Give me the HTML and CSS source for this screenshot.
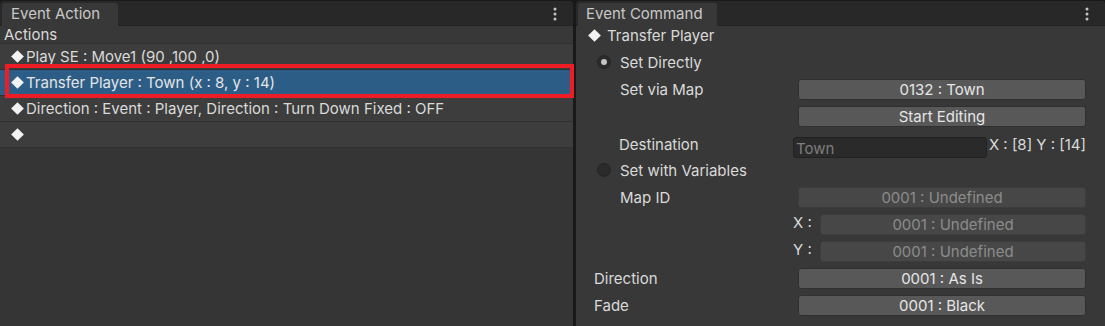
FILE: index.html
```html
<!DOCTYPE html>
<html>
<head>
    <meta charset="utf-8">
    <title>Event Editor</title>
    <link rel="stylesheet" href="styles.css">
</head>
<body>
    <section class="panel panel-left">
        <div class="tabbar">
            <div class="tab">Event Action</div>
            <svg class="kebab" width="4" height="14" viewBox="0 0 4 14"><circle cx="2" cy="2" r="1.5"/><circle cx="2" cy="7" r="1.5"/><circle cx="2" cy="12" r="1.5"/></svg>
        </div>
        <div class="content">
            <div class="list-head">Actions</div>
            <ul class="actions">
                <li class="action"><span class="diamond"></span>Play SE : Move1 (90 ,100 ,0)</li>
                <li class="action selected"><span class="diamond"></span>Transfer Player : Town (x : 8, y : 14)</li>
                <li class="action"><span class="diamond"></span>Direction : Event : Player, Direction : Turn Down Fixed : OFF</li>
                <li class="action"><span class="diamond"></span></li>
            </ul>
            <div class="highlight"></div>
        </div>
    </section>

    <section class="panel panel-right">
        <div class="tabbar">
            <div class="tab">Event Command</div>
            <svg class="kebab" width="4" height="14" viewBox="0 0 4 14"><circle cx="2" cy="2" r="1.5"/><circle cx="2" cy="7" r="1.5"/><circle cx="2" cy="12" r="1.5"/></svg>
        </div>
        <div class="content form">
            <div class="cmd-title"><span class="diamond"></span>Transfer Player</div>

            <div class="radio-row r-direct"><span class="radio on"></span>Set Directly</div>

            <div class="row indent m7">
                <span class="label">Set via Map</span>
                <div class="button">0132 : Town</div>
            </div>
            <div class="row indent m6">
                <div class="button">Start Editing</div>
            </div>
            <div class="row row-top indent m10">
                <span class="label label-top">Destination</span>
                <div class="dest">
                    <div class="textfield">Town</div>
                    <span class="coords">X : [8] Y : [14]</span>
                </div>
            </div>

            <div class="radio-row r-vars"><span class="radio"></span>Set with Variables</div>

            <div class="row indent m7">
                <span class="label">Map ID</span>
                <div class="button disabled">0001 : Undefined</div>
            </div>
            <div class="row m6">
                <div class="axis">
                    <span class="axis-label">X :</span>
                    <div class="button disabled">0001 : Undefined</div>
                </div>
            </div>
            <div class="row m6">
                <div class="axis">
                    <span class="axis-label">Y :</span>
                    <div class="button disabled">0001 : Undefined</div>
                </div>
            </div>

            <div class="row m6">
                <span class="label">Direction</span>
                <div class="button">0001 : As Is</div>
            </div>
            <div class="row m6">
                <span class="label">Fade</span>
                <div class="button">0001 : Black</div>
            </div>
        </div>
    </section>
</body>
</html>
```

FILE: styles.css
```css
body {
    margin: 0;
    width: 1105px;
    height: 326px;
    overflow: hidden;
    background-color: #191919;
    color: #dadada;
    font-family: Inter, "Noto Sans", sans-serif;
    font-size: 15px;
    display: flex;
    gap: 3px;
}

.panel {
    display: flex;
    flex-direction: column;
    height: 100%;
}

.panel-left {
    width: 573px;
}

.panel-right {
    flex: 1;
}

.tabbar {
    height: 24px;
    margin-top: 1px;
    background-color: #282828;
    border-bottom: 1px solid #232323;
    border-radius: 3px 3px 0 0;
    display: flex;
    align-items: flex-end;
    padding-left: 2px;
    padding-right: 16px;
}

.tab {
    height: 23px;
    line-height: 22px;
    padding: 0 9px;
    background-color: #383838;
    border-radius: 3px 3px 0 0;
    color: #c8c8c8;
    margin-bottom: -1px;
    white-space: nowrap;
}

.panel-left .tab {
    width: 98px;
}

.panel-right .tab {
    width: 122px;
    padding-left: 8px;
}

.kebab {
    fill: #c4c4c4;
    margin-left: auto;
    align-self: center;
    margin-top: 1px;
}

.content {
    flex: 1;
    background-color: #383838;
    position: relative;
}

.panel-left .content {
    background-color: #353535;
}

.list-head {
    height: 17px;
    line-height: 17px;
    padding-left: 4px;
    background-color: #383838;
    border-bottom: 1px solid #303030;
}

.actions {
    list-style: none;
    margin: 0;
    padding: 0;
}

.action {
    height: 25px;
    line-height: 25px;
    padding-left: 13px;
    background-color: #3d3d3d;
    border-bottom: 1px solid #303030;
    display: flex;
    align-items: center;
    white-space: nowrap;
}

.action.selected {
    background-color: #2c5d87;
    color: #e4e4e4;
}

.diamond {
    display: inline-block;
    width: 9px;
    height: 9px;
    background-color: #f2f2f2;
    transform: rotate(45deg);
    margin-right: 4px;
}

.highlight {
    position: absolute;
    left: 5px;
    top: 38px;
    width: 561px;
    height: 26px;
    border: 4px solid #ee1c25;
}

/* command form */

.form {
    padding: 0 19px 0 18px;
}

.cmd-title {
    height: 18px;
    display: flex;
    align-items: center;
    margin-left: -4px;
}

.cmd-title .diamond {
    margin-left: 0;
    margin-right: 8px;
}

.radio-row {
    height: 20px;
    display: flex;
    align-items: center;
    padding-left: 3px;
}

.r-direct {
    margin-top: 8px;
}

.r-vars {
    margin-top: 2px;
}

.radio {
    width: 12px;
    height: 12px;
    border-radius: 50%;
    background-color: #2b2b2b;
    border: 1px solid #242424;
    margin-right: 9px;
    position: relative;
}

.radio.on::after {
    content: "";
    position: absolute;
    left: 3px;
    top: 3px;
    width: 6px;
    height: 6px;
    border-radius: 50%;
    background-color: #c4c4c4;
}

.row {
    height: 21px;
    display: flex;
    align-items: center;
}

.row-top {
    align-items: flex-start;
}

.indent {
    padding-left: 26px;
}

.m6 { margin-top: 6px; }
.m7 { margin-top: 7px; }
.m10 { margin-top: 10px; }

.label {
    white-space: nowrap;
}

.label-top {
    line-height: 15px;
    margin-left: -1px;
}

.button {
    width: 286px;
    height: 19px;
    line-height: 19px;
    margin-left: auto;
    background-color: #585858;
    border: 1px solid #303030;
    border-radius: 3px;
    text-align: center;
    color: #e6e6e6;
}

.button.disabled {
    background-color: #474747;
    border-color: #3c3c3c;
    color: #8c8c8c;
}

.dest {
    margin-left: auto;
    width: 293px;
    display: flex;
    align-items: flex-start;
    height: 21px;
}

.textfield {
    width: 191px;
    height: 19px;
    line-height: 21px;
    background-color: #2a2a2a;
    border: 1px solid #212121;
    border-radius: 3px;
    padding-left: 2px;
    color: #7e7e7e;
}

.coords {
    margin-left: 2px;
    line-height: 15px;
    white-space: nowrap;
}

.axis {
    margin-left: auto;
    width: 293px;
    display: flex;
    align-items: center;
}

.axis-label {
    width: 27px;
    margin-top: -4px;
}

.axis .button {
    width: 264px;
}
```
